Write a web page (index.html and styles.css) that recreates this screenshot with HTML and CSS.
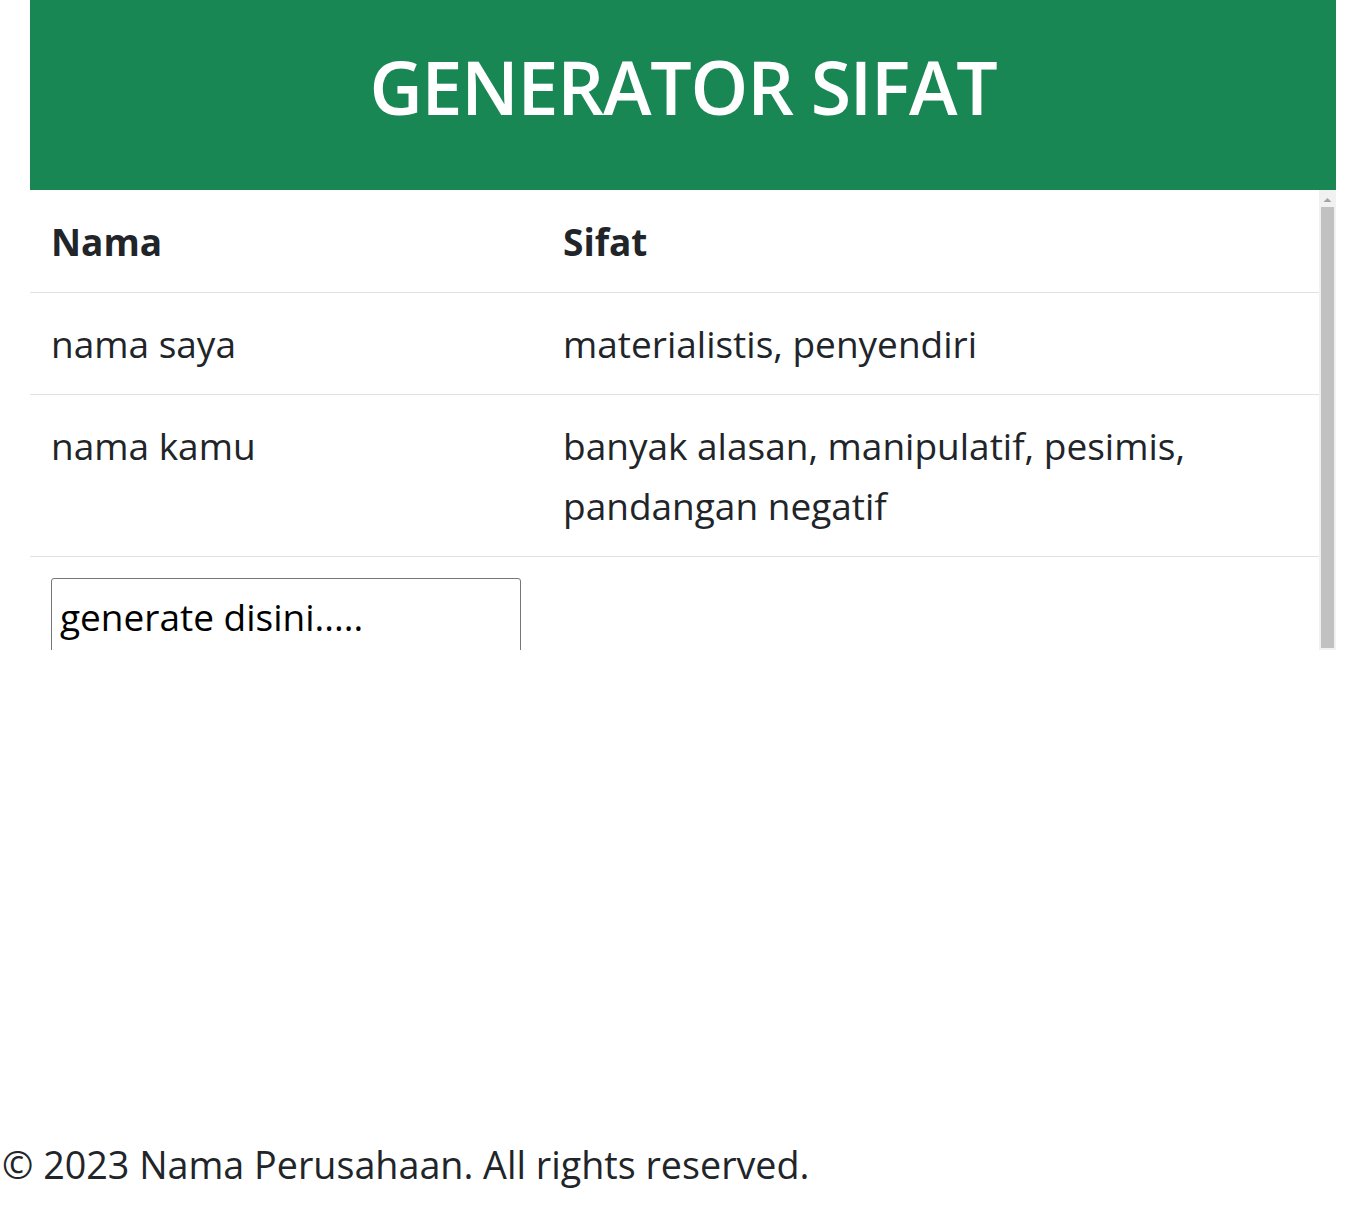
FILE: index.html
```html
<!DOCTYPE html>
<html lang="id">
<head>
<meta charset="utf-8">
<title>Generator Sifat</title>
<link rel="stylesheet" href="styles.css">
</head>
<body>
<header class="banner">
  <h1 class="banner-title">GENERATOR SIFAT</h1>
</header>
<main class="panel">
  <div class="panel-view">
    <table class="traits">
      <thead>
        <tr><th class="col-name">Nama</th><th>Sifat</th></tr>
      </thead>
      <tbody>
        <tr><td>nama saya</td><td>materialistis, penyendiri</td></tr>
        <tr><td>nama kamu</td><td>banyak alasan, manipulatif, pesimis, pandangan negatif</td></tr>
        <tr class="input-row"><td><input class="name-input" type="text" value="generate disini....."></td><td></td></tr>
      </tbody>
    </table>
  </div>
  <div class="scrollbar" aria-hidden="true">
    <div class="scroll-btn">
      <svg width="17" height="17" viewBox="0 0 17 17"><polygon points="4.5,12 8.5,8 12.5,12" fill="#a3a3a3"/></svg>
    </div>
    <div class="scroll-thumb"></div>
  </div>
</main>
<footer class="footer">© 2023 Nama Perusahaan. All rights reserved.</footer>
</body>
</html>
```

FILE: styles.css
```css
html, body {
  margin: 0;
  padding: 0;
}
body {
  min-height: 1232px;
  display: flex;
  flex-direction: column;
  font-family: "Open Sans", "Noto Sans", sans-serif;
  color: #212529;
  background: #fff;
}
.banner {
  margin: 0 30px;
  height: 190px;
  box-sizing: border-box;
  padding-bottom: 14px;
  background: #198754;
  display: flex;
  align-items: center;
  justify-content: center;
}
.banner-title {
  margin: 0;
  color: #fff;
  font-size: 73.4px;
  font-weight: 600;
  letter-spacing: -1.2px;
  line-height: 1;
}
.panel {
  margin: 0 30px;
  height: 460px;
  display: flex;
}
.panel-view {
  flex: 1;
  overflow: hidden;
}
.scrollbar {
  width: 17px;
  background: #f1f1f1;
  display: flex;
  flex-direction: column;
  padding-bottom: 2px;
  box-sizing: border-box;
}
.scroll-btn {
  height: 17px;
  display: flex;
}
.scroll-thumb {
  flex: 1;
  margin: 0 2px;
  background: #c1c1c1;
}
.traits {
  width: 100%;
  border-collapse: collapse;
  font-size: 37px;
  line-height: 60px;
}
.traits th,
.traits td {
  text-align: left;
  vertical-align: top;
  padding: 21px 21px 20px;
  border-bottom: 1px solid #dee2e6;
}
.traits th {
  font-weight: 700;
  padding-top: 22px;
}
.col-name {
  width: 470px;
}
.input-row td {
  border-bottom: 0;
}
.name-input {
  box-sizing: border-box;
  width: 470px;
  height: 76px;
  margin-top: 0;
  padding: 2px 8px;
  font-family: inherit;
  font-size: 37px;
  color: #000;
  border: 1px solid #767676;
  border-radius: 3px;
  display: block;
}
.footer {
  margin-top: auto;
  padding: 0 0 37px 2px;
  font-size: 37.7px;
  line-height: 60px;
}
```
